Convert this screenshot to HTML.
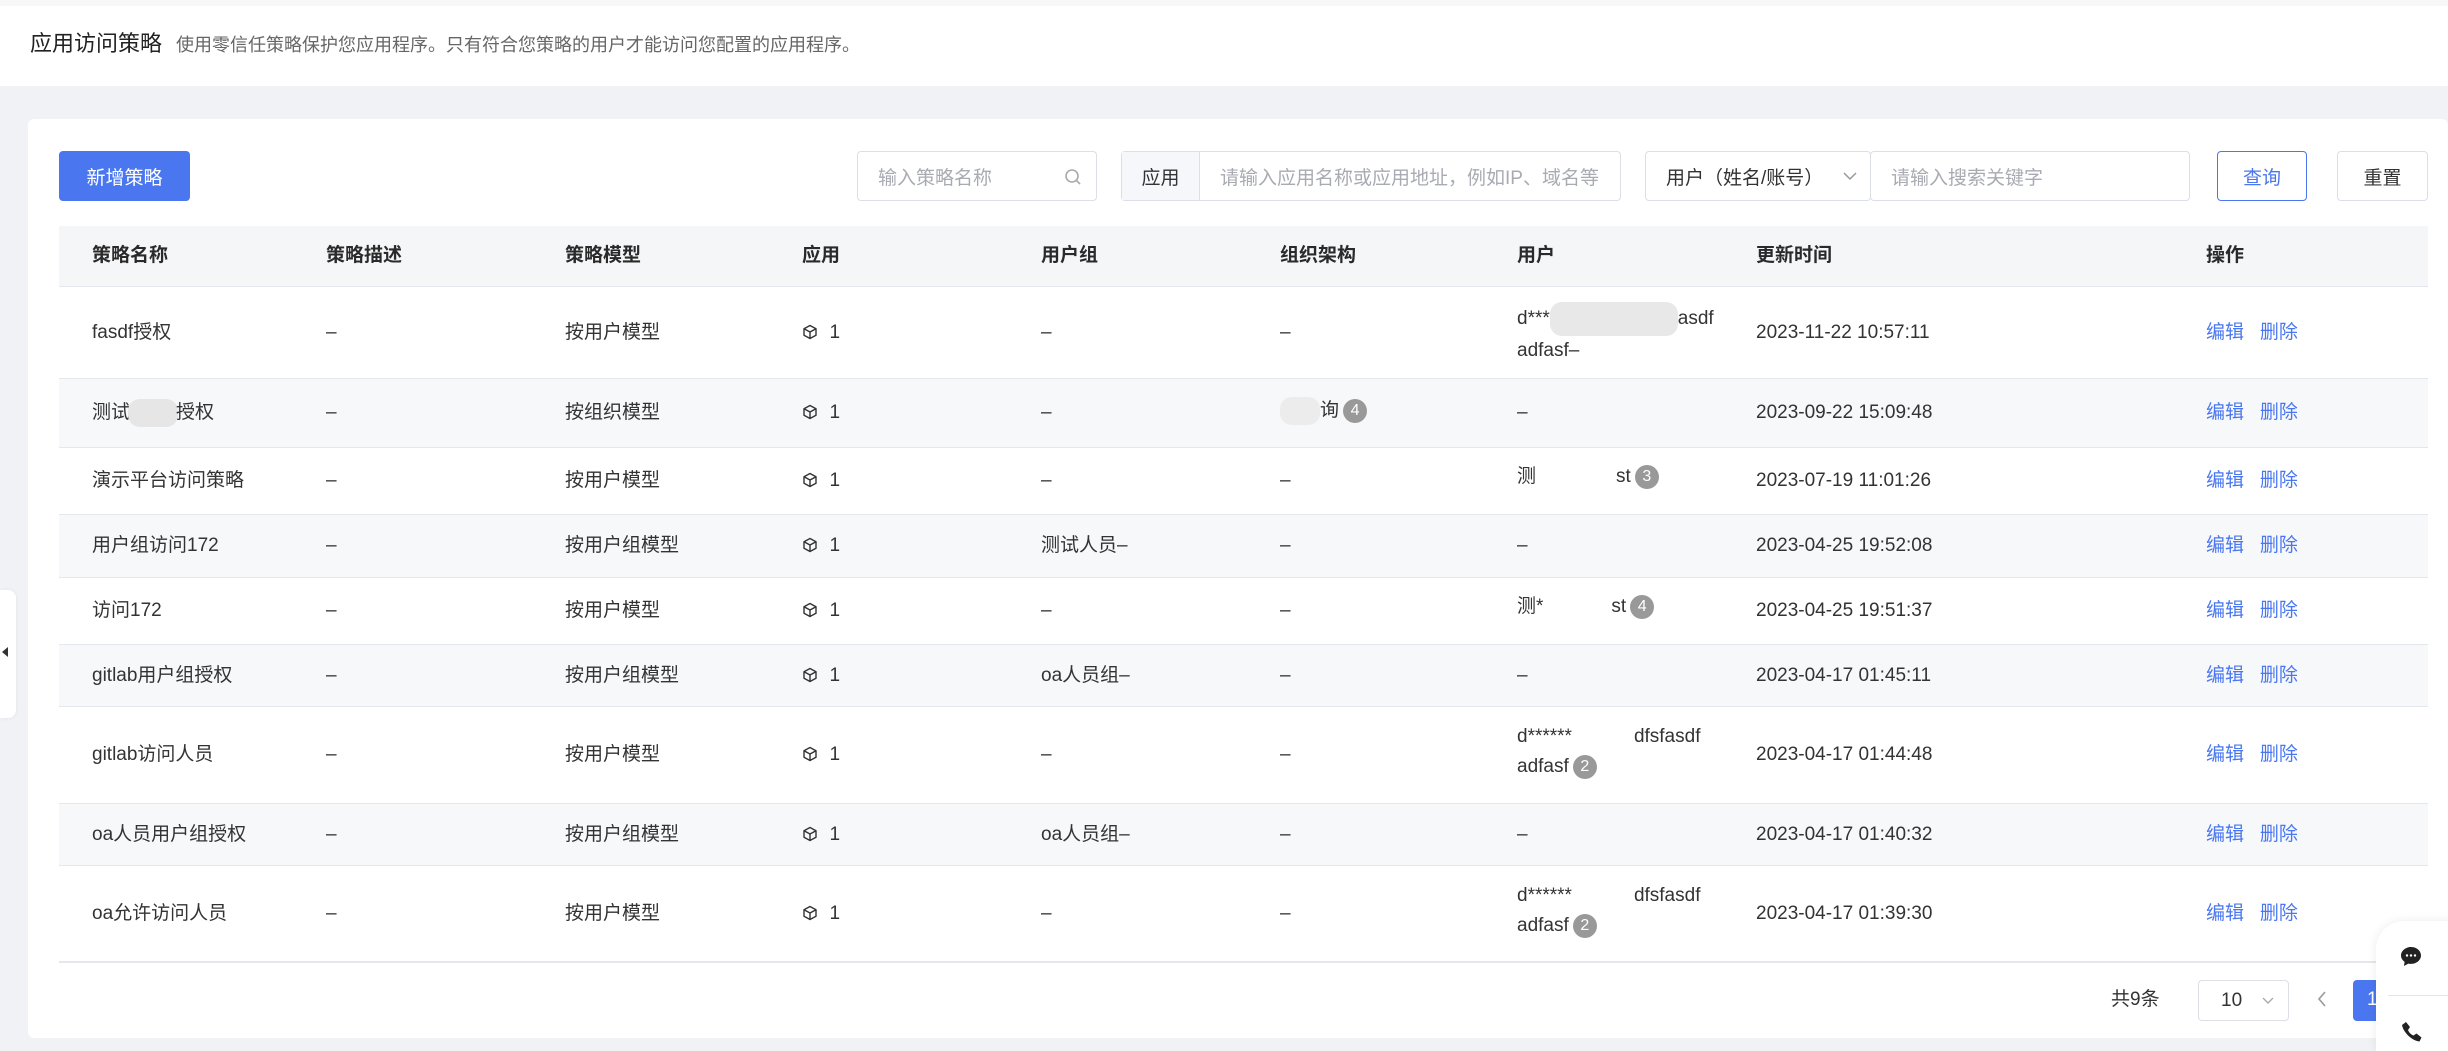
<!DOCTYPE html>
<html><head><meta charset="utf-8"><style>
*{box-sizing:border-box;margin:0;padding:0}
body{width:2448px;height:1038px;overflow:hidden;background:#f0f2f5;font-family:"Liberation Sans","Noto Sans CJK SC",sans-serif;color:#333;position:relative}
.hdr{position:absolute;left:0;top:0;width:2448px;height:86px;background:#fff;border-top:6px solid #f7f7f8}
.hdr .t{position:absolute;left:30px;top:22px;font-size:22px;color:#222;line-height:32px}
.hdr .d{position:absolute;left:176px;top:25px;font-size:18px;color:#666;line-height:28px}
.card{position:absolute;left:28px;top:119px;width:2420px;height:919px;background:#fff;border-radius:6px}
.abs{position:absolute}
.btn{position:absolute;top:151px;height:50px;border-radius:4px;font-size:19px;display:flex;align-items:center;justify-content:center}
.inp{position:absolute;top:151px;height:50px;border:1px solid #dcdfe6;border-radius:4px;font-size:19px;color:#a8abb2;display:flex;align-items:center;padding-left:20px;background:#fff}
.th{position:absolute;top:226px;left:59px;width:2369px;height:61px;background:#f5f6f8;border-bottom:1px solid #e4e7ed}
.row{position:absolute;left:59px;width:2369px;border-bottom:1px solid #e4e7ed}
.c{position:absolute;font-size:19px;white-space:nowrap;color:#333;line-height:30px}
.hc{font-weight:bold;color:#2a2a2a}
.lk{color:#4a77f0}
.bd{display:inline-block;width:24px;height:24px;border-radius:12px;background:#999;color:#fff;font-size:16px;text-align:center;line-height:24px;vertical-align:middle;margin-left:4px}
.blur{display:inline-block;background:#e6e6e6;border-radius:12px;vertical-align:middle}
</style></head><body>
<div class="hdr"><div class="t">应用访问策略</div><div class="d">使用零信任策略保护您应用程序。只有符合您策略的用户才能访问您配置的应用程序。</div></div>
<div class="card"></div>
<div class="btn" style="left:59px;width:131px;background:#4a77f0;color:#fff">新增策略</div>
<div class="inp" style="left:857px;width:240px">输入策略名称<svg class="abs" style="left:206px;top:16px" width="18" height="18" viewBox="0 0 18 18"><circle cx="8" cy="8" r="6" fill="none" stroke="#aaa" stroke-width="1.6"/><path d="M12.5 12.5L16 16" stroke="#aaa" stroke-width="1.6"/></svg></div>
<div class="inp" style="left:1121px;width:500px;padding-left:0"><div style="width:78px;height:48px;background:#f5f7fa;border-right:1px solid #dcdfe6;color:#333;display:flex;align-items:center;justify-content:center">应用</div><span style="margin-left:20px">请输入应用名称或应用地址，例如IP、域名等</span></div>
<div class="inp" style="left:1645px;width:226px;color:#333">用户（姓名/账号）<svg class="abs" style="left:196px;top:18px" width="16" height="12" viewBox="0 0 16 12"><path d="M2 3l6 6 6-6" fill="none" stroke="#999" stroke-width="1.5"/></svg></div>
<div class="inp" style="left:1870px;width:320px">请输入搜索关键字</div>
<div class="btn" style="left:2217px;width:90px;border:1px solid #4a77f0;color:#4a77f0">查询</div>
<div class="btn" style="left:2337px;width:91px;border:1px solid #dcdfe6;color:#333">重置</div>

<div class="th"></div>
<div class="c hc" style="left:92px;top:241px">策略名称</div>
<div class="c hc" style="left:326px;top:241px">策略描述</div>
<div class="c hc" style="left:565px;top:241px">策略模型</div>
<div class="c hc" style="left:802px;top:241px">应用</div>
<div class="c hc" style="left:1041px;top:241px">用户组</div>
<div class="c hc" style="left:1280px;top:241px">组织架构</div>
<div class="c hc" style="left:1517px;top:241px">用户</div>
<div class="c hc" style="left:1756px;top:241px">更新时间</div>
<div class="c hc" style="left:2206px;top:241px">操作</div>

<div class="row" style="top:287px;height:92px"></div>
<div class="row" style="top:379px;height:69px;background:#f7f8fa"></div>
<div class="row" style="top:448px;height:67px"></div>
<div class="row" style="top:515px;height:63px;background:#f7f8fa"></div>
<div class="row" style="top:578px;height:67px"></div>
<div class="row" style="top:645px;height:62px;background:#f7f8fa"></div>
<div class="row" style="top:707px;height:97px"></div>
<div class="row" style="top:804px;height:62px;background:#f7f8fa"></div>
<div class="row" style="top:866px;height:97px;border-bottom:2px solid #e4e7ed"></div>

<svg width="0" height="0" style="position:absolute"><defs><g id="cube"><path d="M8 1.5l6 3.2v6.6L8 14.5 2 11.3V4.7z M2 4.7l6 3.3 6-3.3 M8 8v6.5" fill="none" stroke="#333" stroke-width="1.4" stroke-linejoin="round"/></g></defs></svg>

<div class="c" style="left:92px;top:318px">fasdf授权</div>
<div class="c" style="left:92px;top:398px">测试<span class="blur" style="width:50px;height:28px;margin:0 -2px"></span>授权</div>
<div class="c" style="left:92px;top:466px">演示平台访问策略</div>
<div class="c" style="left:92px;top:531px">用户组访问172</div>
<div class="c" style="left:92px;top:596px">访问172</div>
<div class="c" style="left:92px;top:661px">gitlab用户组授权</div>
<div class="c" style="left:92px;top:740px">gitlab访问人员</div>
<div class="c" style="left:92px;top:820px">oa人员用户组授权</div>
<div class="c" style="left:92px;top:899px">oa允许访问人员</div>

<div class="c" style="left:326px;top:318px">–</div><div class="c" style="left:326px;top:398px">–</div><div class="c" style="left:326px;top:466px">–</div><div class="c" style="left:326px;top:531px">–</div><div class="c" style="left:326px;top:596px">–</div><div class="c" style="left:326px;top:661px">–</div><div class="c" style="left:326px;top:740px">–</div><div class="c" style="left:326px;top:820px">–</div><div class="c" style="left:326px;top:899px">–</div>

<div class="c" style="left:565px;top:318px">按用户模型</div>
<div class="c" style="left:565px;top:398px">按组织模型</div>
<div class="c" style="left:565px;top:466px">按用户模型</div>
<div class="c" style="left:565px;top:531px">按用户组模型</div>
<div class="c" style="left:565px;top:596px">按用户模型</div>
<div class="c" style="left:565px;top:661px">按用户组模型</div>
<div class="c" style="left:565px;top:740px">按用户模型</div>
<div class="c" style="left:565px;top:820px">按用户组模型</div>
<div class="c" style="left:565px;top:899px">按用户模型</div>

<div class="c" style="left:802px;top:318px"><svg width="17" height="16" style="vertical-align:-2px"><use href="#cube"/></svg>&nbsp; 1</div>
<div class="c" style="left:802px;top:398px"><svg width="17" height="16" style="vertical-align:-2px"><use href="#cube"/></svg>&nbsp; 1</div>
<div class="c" style="left:802px;top:466px"><svg width="17" height="16" style="vertical-align:-2px"><use href="#cube"/></svg>&nbsp; 1</div>
<div class="c" style="left:802px;top:531px"><svg width="17" height="16" style="vertical-align:-2px"><use href="#cube"/></svg>&nbsp; 1</div>
<div class="c" style="left:802px;top:596px"><svg width="17" height="16" style="vertical-align:-2px"><use href="#cube"/></svg>&nbsp; 1</div>
<div class="c" style="left:802px;top:661px"><svg width="17" height="16" style="vertical-align:-2px"><use href="#cube"/></svg>&nbsp; 1</div>
<div class="c" style="left:802px;top:740px"><svg width="17" height="16" style="vertical-align:-2px"><use href="#cube"/></svg>&nbsp; 1</div>
<div class="c" style="left:802px;top:820px"><svg width="17" height="16" style="vertical-align:-2px"><use href="#cube"/></svg>&nbsp; 1</div>
<div class="c" style="left:802px;top:899px"><svg width="17" height="16" style="vertical-align:-2px"><use href="#cube"/></svg>&nbsp; 1</div>

<div class="c" style="left:1041px;top:318px">–</div><div class="c" style="left:1041px;top:398px">–</div><div class="c" style="left:1041px;top:466px">–</div><div class="c" style="left:1041px;top:531px">测试人员–</div><div class="c" style="left:1041px;top:596px">–</div><div class="c" style="left:1041px;top:661px">oa人员组–</div><div class="c" style="left:1041px;top:740px">–</div><div class="c" style="left:1041px;top:820px">oa人员组–</div><div class="c" style="left:1041px;top:899px">–</div>

<div class="c" style="left:1280px;top:318px">–</div>
<div class="c" style="left:1280px;top:396px"><span class="blur" style="width:40px;height:28px;background:#ececec"></span>询<span class="bd">4</span></div>
<div class="c" style="left:1280px;top:466px">–</div><div class="c" style="left:1280px;top:531px">–</div><div class="c" style="left:1280px;top:596px">–</div><div class="c" style="left:1280px;top:661px">–</div><div class="c" style="left:1280px;top:740px">–</div><div class="c" style="left:1280px;top:820px">–</div><div class="c" style="left:1280px;top:899px">–</div>

<div class="c" style="left:1517px;top:302px">d***<span class="blur" style="width:128px;height:34px;background:#e8e8e8"></span>asdf<br>adfasf–</div>
<div class="c" style="left:1517px;top:398px">–</div>
<div class="c" style="left:1517px;top:462px">测<span style="display:inline-block;width:80px"></span>st<span class="bd">3</span></div>
<div class="c" style="left:1517px;top:531px">–</div>
<div class="c" style="left:1517px;top:592px">测*<span style="display:inline-block;width:68px"></span>st<span class="bd">4</span></div>
<div class="c" style="left:1517px;top:661px">–</div>
<div class="c" style="left:1517px;top:722px">d******<span style="display:inline-block;width:62px"></span>dfsfasdf<br>adfasf<span class="bd">2</span></div>
<div class="c" style="left:1517px;top:820px">–</div>
<div class="c" style="left:1517px;top:881px">d******<span style="display:inline-block;width:62px"></span>dfsfasdf<br>adfasf<span class="bd">2</span></div>

<div class="c" style="left:1756px;top:318px">2023-11-22 10:57:11</div>
<div class="c" style="left:1756px;top:398px">2023-09-22 15:09:48</div>
<div class="c" style="left:1756px;top:466px">2023-07-19 11:01:26</div>
<div class="c" style="left:1756px;top:531px">2023-04-25 19:52:08</div>
<div class="c" style="left:1756px;top:596px">2023-04-25 19:51:37</div>
<div class="c" style="left:1756px;top:661px">2023-04-17 01:45:11</div>
<div class="c" style="left:1756px;top:740px">2023-04-17 01:44:48</div>
<div class="c" style="left:1756px;top:820px">2023-04-17 01:40:32</div>
<div class="c" style="left:1756px;top:899px">2023-04-17 01:39:30</div>

<div class="c lk" style="left:2206px;top:318px">编辑&nbsp;&nbsp;&nbsp;删除</div>
<div class="c lk" style="left:2206px;top:398px">编辑&nbsp;&nbsp;&nbsp;删除</div>
<div class="c lk" style="left:2206px;top:466px">编辑&nbsp;&nbsp;&nbsp;删除</div>
<div class="c lk" style="left:2206px;top:531px">编辑&nbsp;&nbsp;&nbsp;删除</div>
<div class="c lk" style="left:2206px;top:596px">编辑&nbsp;&nbsp;&nbsp;删除</div>
<div class="c lk" style="left:2206px;top:661px">编辑&nbsp;&nbsp;&nbsp;删除</div>
<div class="c lk" style="left:2206px;top:740px">编辑&nbsp;&nbsp;&nbsp;删除</div>
<div class="c lk" style="left:2206px;top:820px">编辑&nbsp;&nbsp;&nbsp;删除</div>
<div class="c lk" style="left:2206px;top:899px">编辑&nbsp;&nbsp;&nbsp;删除</div>

<div class="c" style="left:2111px;top:985px">共9条</div>
<div class="abs" style="left:2198px;top:980px;width:91px;height:41px;border:1px solid #dcdfe6;border-radius:4px;font-size:19px;padding:9px 0 0 22px">10<svg class="abs" style="left:62px;top:15px" width="14" height="10" viewBox="0 0 14 10"><path d="M2 2l5 5 5-5" fill="none" stroke="#aaa" stroke-width="1.4"/></svg></div>
<svg class="abs" style="left:2315px;top:989px" width="14" height="20" viewBox="0 0 14 20"><path d="M10 3L4 10l6 7" fill="none" stroke="#999" stroke-width="1.6"/></svg>
<div class="abs" style="left:2353px;top:980px;width:40px;height:41px;background:#4a77f0;border-radius:4px;color:#fff;font-size:19px;padding:9px 0 0 14px">1</div>

<div class="abs" style="left:2376px;top:921px;width:80px;height:130px;background:#fff;border-radius:28px 0 0 0;box-shadow:0 0 10px rgba(0,0,0,.08)"></div>
<svg class="abs" style="left:2398px;top:944px" width="26" height="26" viewBox="0 0 26 26"><path d="M13 3C7.5 3 3 7 3 11.5c0 2.6 1.4 4.8 3.6 6.3L6 22l4.3-2.4c.9.2 1.8.3 2.7.3 5.5 0 10-3.8 10-8.4S18.5 3 13 3z" fill="#222"/><circle cx="9" cy="11.5" r="1.2" fill="#fff"/><circle cx="13" cy="11.5" r="1.2" fill="#fff"/><circle cx="17" cy="11.5" r="1.2" fill="#fff"/></svg>
<div class="abs" style="left:2388px;top:995px;width:60px;height:1px;background:#e5e5e5"></div>
<svg class="abs" style="left:2400px;top:1020px" width="24" height="24" viewBox="0 0 24 24"><path d="M6 2l4 5-2 3c1 2.5 3 4.5 5.5 5.5l3-2 5 4-2 4C12 21 3 12 2 5z" fill="#222"/></svg>

<div class="abs" style="left:0;top:590px;width:16px;height:128px;background:#fff;border-radius:0 8px 8px 0;box-shadow:0 0 4px rgba(0,0,0,.06)"></div>
<svg class="abs" style="left:1px;top:646px" width="8" height="12" viewBox="0 0 8 12"><path d="M7 1L1 6l6 5z" fill="#333"/></svg>
</body></html>
